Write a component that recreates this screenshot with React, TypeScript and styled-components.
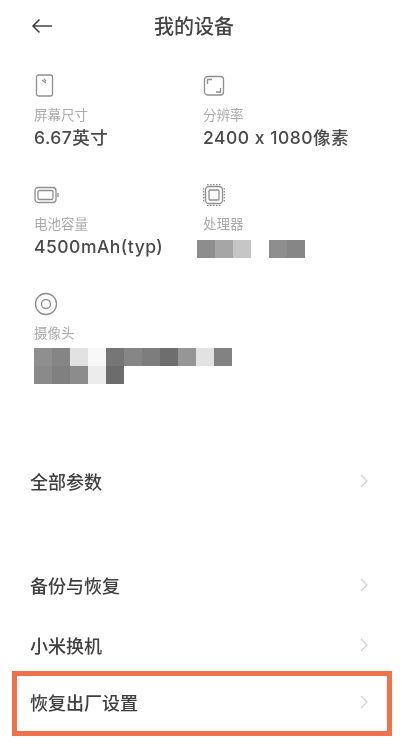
import React from 'react';
import styled, {createGlobalStyle} from "styled-components";

const GlobalStyle = createGlobalStyle`
  html, body {
    margin: 0;
    padding: 0;
    background: #fff;
  }
  body {
    font-family: "Noto Sans CJK SC", "Noto Sans", sans-serif;
  }
`

const ScreenIcon = () => (
    <svg width="20" height="24" viewBox="0 0 20 24" fill="none" stroke="#8f8f8f" strokeWidth="1.3">
        <rect x="2.5" y="1" width="16" height="21" rx="2"/>
        <path d="M8 6l4 3M10 5l2 2"/>
    </svg>
)

const ResolutionIcon = () => (
    <svg width="22" height="22" viewBox="0 0 22 22" fill="none" stroke="#8f8f8f" strokeWidth="1.3">
        <rect x="1.5" y="1.5" width="19" height="18.5" rx="3"/>
        <path d="M4.5 9V4.5H9M17.5 13v4H13"/>
    </svg>
)

const BatteryIcon = () => (
    <svg width="26" height="18" viewBox="0 0 26 18" fill="none" stroke="#8f8f8f" strokeWidth="1.3">
        <rect x="1" y="1.5" width="21" height="15" rx="3"/>
        <rect x="4" y="4.5" width="15" height="9" rx="1.5"/>
        <path d="M24 7v4"/>
    </svg>
)

const ChipIcon = () => (
    <svg width="22" height="22" viewBox="0 0 22 22" fill="none" stroke="#8f8f8f" strokeWidth="1.3">
        <rect x="2.5" y="2.5" width="17" height="17" rx="3.5"/>
        <rect x="6" y="6" width="10" height="10" rx="1"/>
        <path strokeDasharray="1.5 1.5" d="M4 .7h14M4 21.3h14M.7 4v14M21.3 4v14"/>
    </svg>
)

const CameraIcon = () => (
    <svg width="24" height="24" viewBox="0 0 24 24" fill="none" stroke="#8f8f8f" strokeWidth="1.3">
        <circle cx="12" cy="12" r="10.5"/>
        <circle cx="12" cy="12" r="4.5"/>
    </svg>
)

type MosaicPropsType = {
    cells: (string | null)[]
    columns: number
}

const Mosaic = (props: MosaicPropsType) => {
    return (
        <StyledMosaic $columns={props.columns}>
            {props.cells.map((color, i) => <Cell key={i} $color={color}/>)}
        </StyledMosaic>
    );
};

const Row = (props: { title: string }) => {
    return (
        <Item>
            {props.title}
            <svg width="8" height="14" viewBox="0 0 8 14" fill="none" stroke="#d2d2d2" strokeWidth="1.2">
                <path d="M1 1l6 6-6 6"/>
            </svg>
        </Item>
    );
};

export default function App() {
    return (
        <Page>
            <GlobalStyle/>
            <Header>
                <BackButton>
                    <svg width="22" height="16" viewBox="0 0 22 16" fill="none" stroke="#444" strokeWidth="1.6">
                        <path d="M21 8H2M8.5 1.5L2 8l6.5 6.5"/>
                    </svg>
                </BackButton>
                <Title>我的设备</Title>
            </Header>
            <Specs>
                <Spec>
                    <IconBox><ScreenIcon/></IconBox>
                    <Label>屏幕尺寸</Label>
                    <Value>6.67英寸</Value>
                </Spec>
                <Spec>
                    <IconBox><ResolutionIcon/></IconBox>
                    <Label>分辨率</Label>
                    <Value>2400 x 1080像素</Value>
                </Spec>
                <Spec>
                    <IconBox><BatteryIcon/></IconBox>
                    <Label>电池容量</Label>
                    <Value>4500mAh(typ)</Value>
                </Spec>
                <Spec>
                    <IconBox><ChipIcon/></IconBox>
                    <Label>处理器</Label>
                    <ChipMosaic>
                        <Mosaic columns={6} cells={['#8d8d8d', '#a6a6a6', '#c6c6c6', null, '#8e8e8e', '#868686']}/>
                    </ChipMosaic>
                </Spec>
                <Spec>
                    <IconBox><CameraIcon/></IconBox>
                    <Label>摄像头</Label>
                    <CameraMosaic>
                        <Mosaic columns={11} cells={[
                            '#8f8f8f', '#858585', '#e2e2e2', '#f8f8f8', '#767676', '#868686', '#7d7d7d', '#6e6e6e', '#969696', '#e2e2e2', '#828282',
                            '#8a8a8a', '#808080', '#8c8c8c', '#ececec', '#6c6c6c',
                        ]}/>
                    </CameraMosaic>
                </Spec>
            </Specs>
            <AllParams>
                <Row title="全部参数"/>
            </AllParams>
            <Actions>
                <Row title="备份与恢复"/>
                <Row title="小米换机"/>
                <Highlight>
                    <Row title="恢复出厂设置"/>
                </Highlight>
            </Actions>
        </Page>
    );
}

const Page = styled.div`
  width: 402px;
  height: 750px;
  overflow: hidden;
  background-color: #fff;
  filter: blur(0.4px);
`
const Header = styled.header`
  height: 52px;
  display: flex;
  align-items: center;
  padding-left: 31px;
`
const BackButton = styled.div`
  width: 22px;
  height: 16px;
  display: flex;
`
const Title = styled.h1`
  margin: 0 0 0 101px;
  font-size: 20px;
  line-height: 28px;
  font-weight: 500;
  color: #444;
`
const Specs = styled.div`
  display: grid;
  grid-template-columns: 169px 1fr;
  grid-auto-rows: 109px;
  padding: 22px 0 0 34px;
  height: 378px;
  box-sizing: border-box;
`
const Spec = styled.div`
  display: flex;
  flex-direction: column;
  align-items: flex-start;
`
const IconBox = styled.div`
  height: 24px;
  display: flex;
  align-items: center;
  margin-bottom: 7px;
`
const Label = styled.div`
  font-size: 13.5px;
  line-height: 18px;
  color: #ababab;
`
const Value = styled.div`
  font-family: Inter, "Noto Sans CJK SC", sans-serif;
  font-size: 17.5px;
  line-height: 26px;
  margin-top: 2px;
  letter-spacing: 0.5px;
  font-weight: 500;
  color: #4a4a4a;
  white-space: nowrap;
`
const ChipMosaic = styled.div`
  margin: 8px 0 0 -6px;
`
const CameraMosaic = styled.div`
  margin-top: 7px;
`
const StyledMosaic = styled.div<{ $columns: number }>`
  display: grid;
  grid-template-columns: repeat(${props => props.$columns}, 18px);
  grid-auto-rows: 18px;
`
const Cell = styled.div<{ $color: string | null }>`
  background-color: ${props => props.$color ?? 'transparent'};
`
const AllParams = styled.div`
  padding-top: 36px;
`
const Actions = styled.div`
  margin-top: 74px;
  display: flex;
  flex-direction: column;
  gap: 30px;
`
const Item = styled.div`
  height: 30px;
  padding: 0 34px 0 30px;
  display: flex;
  align-items: center;
  justify-content: space-between;
  font-size: 18px;
  font-weight: 500;
  color: #3f3f3f;
`
const Highlight = styled.div`
  margin: -19px 10px 0 12px;
  height: 65px;
  padding-bottom: 3px;
  box-sizing: border-box;
  border: 5px solid #f0724a;
  display: flex;
  flex-direction: column;
  justify-content: center;

  ${Item} {
    padding: 0 19px 0 13px;
  }
`
